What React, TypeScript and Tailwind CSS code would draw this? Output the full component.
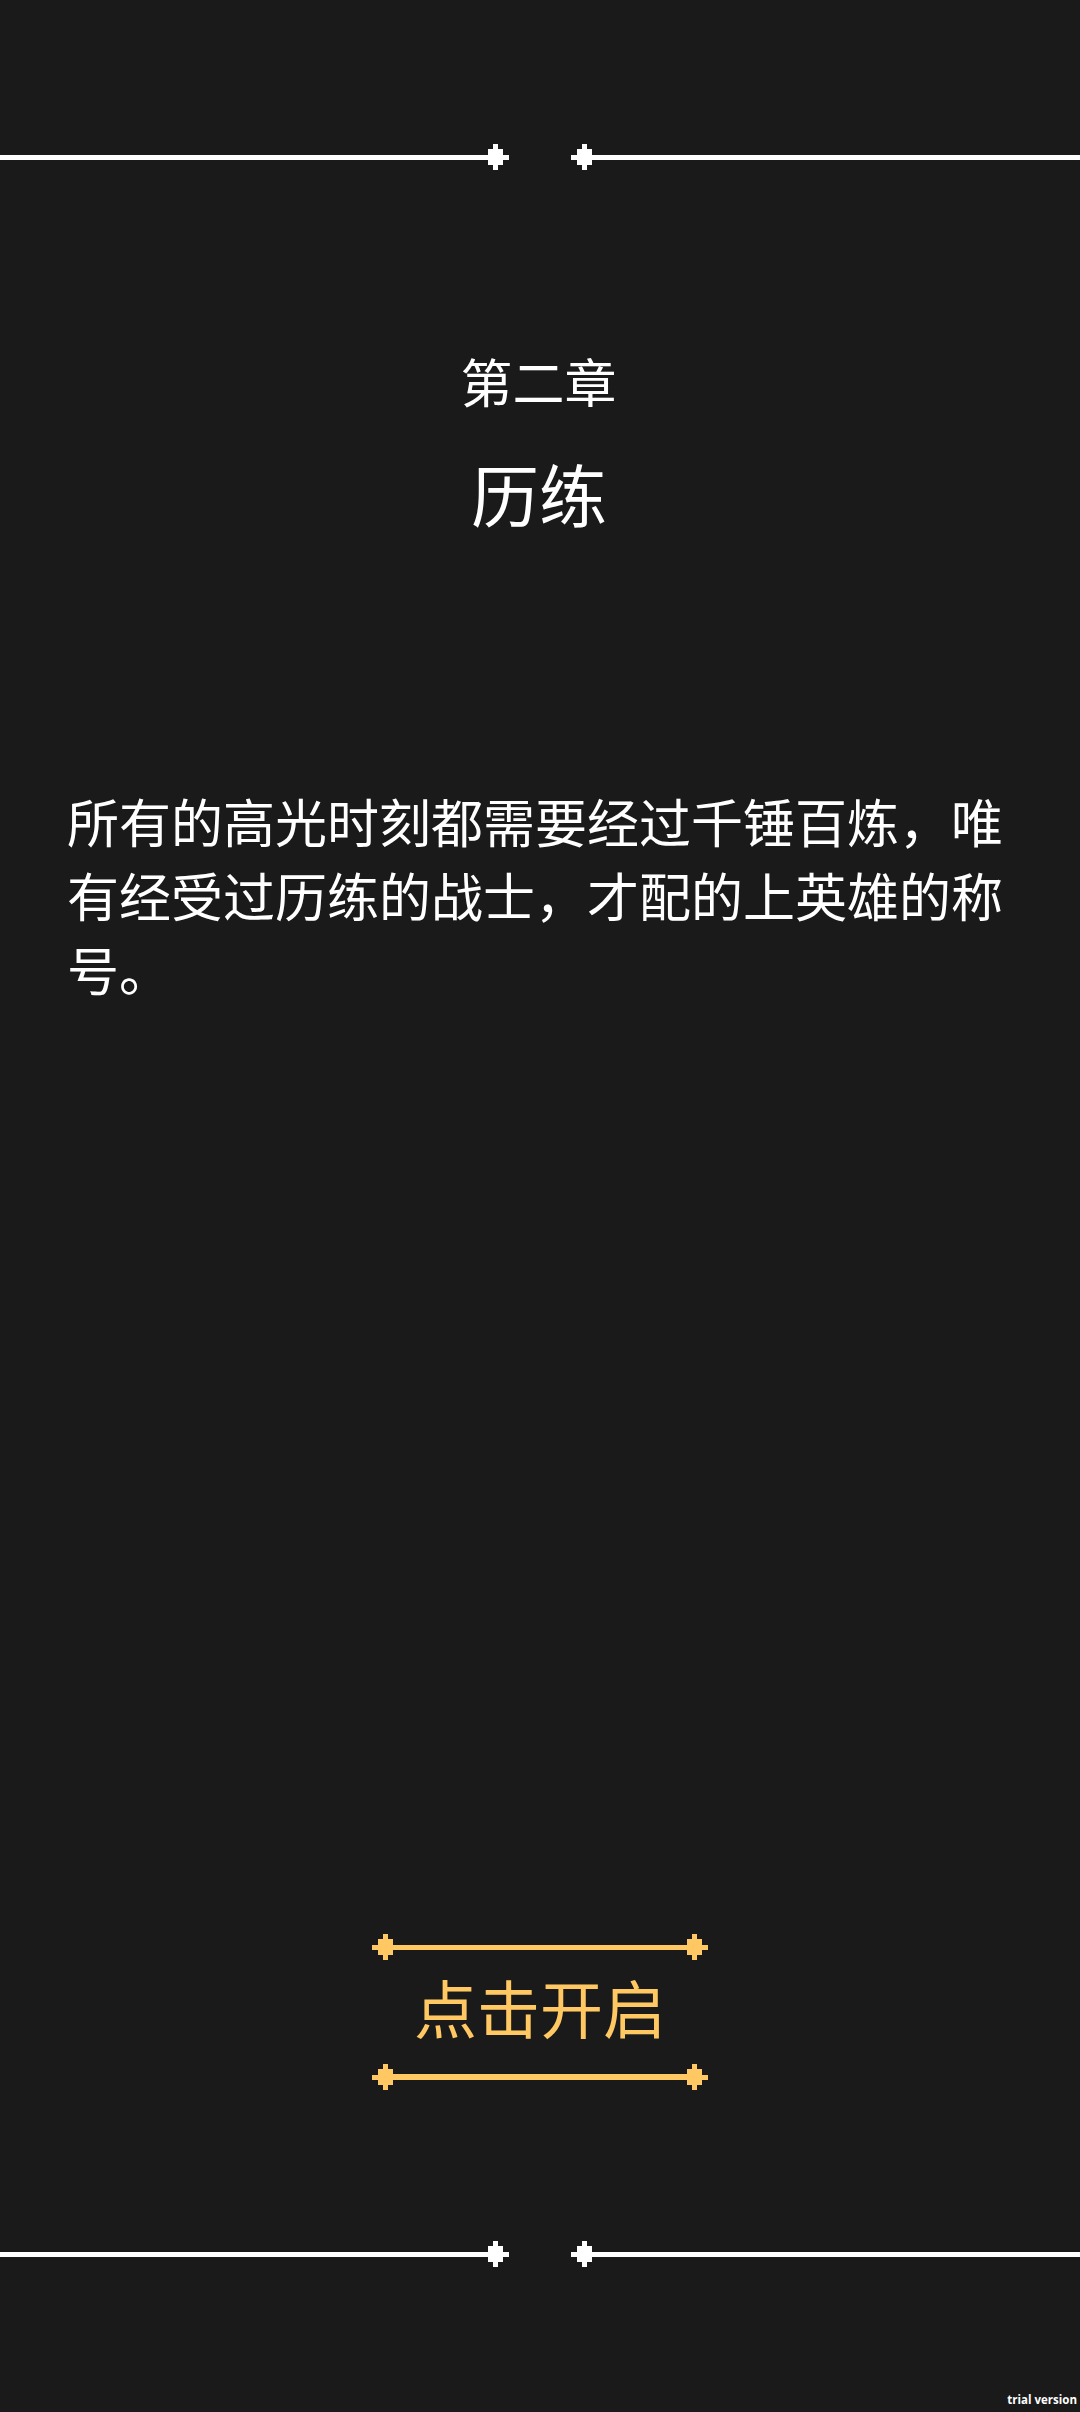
import React from 'react';

const Knob: React.FC<{ flip?: boolean }> = ({ flip }) => (
    <svg width="21" height="26" viewBox="0 0 21 26" fill="currentColor" className={`shrink-0 ${flip ? '-scale-x-100' : ''}`} shapeRendering="crispEdges">
        <rect x="0" y="5" width="15" height="16" />
        <rect x="5" y="0" width="5" height="26" />
        <rect x="15" y="11" width="6" height="5" />
    </svg>
);

const Divider: React.FC = () => (
    <div className="flex items-center text-white">
        <div className="h-[5px] flex-1 bg-white" />
        <Knob />
        <div className="w-[62px]" />
        <Knob flip />
        <div className="h-[5px] flex-1 bg-white" />
    </div>
);

const ButtonRule: React.FC<{ thick?: boolean }> = ({ thick }) => (
    <div className="flex items-center text-[#ffc862]">
        <Knob flip />
        <div className={`flex-1 bg-[#ffc862] ${thick ? 'h-[6px]' : 'h-[5px]'}`} />
        <Knob />
    </div>
);

export default function App() {
    return (
        <div className="relative flex h-[2412px] w-[1080px] flex-col overflow-hidden bg-[#1a1a1a] pt-[144px] font-['Noto_Sans_CJK_SC',sans-serif] text-white">
            <Divider />

            <p className="mt-[174px] pr-[3px] text-center text-[52px] leading-[74px]">第二章</p>
            <h1 className="mt-[35px] pr-[2px] text-center text-[68px] font-normal leading-[80px]">历练</h1>

            <p className="mt-[251px] pl-[67px] pr-[68px] text-[52px] leading-[74px]">
                所有的高光时刻都需要经过千锤百炼，唯有经受过历练的战士，才配的上英雄的称号。
            </p>

            <button className="mx-auto mt-[928px] block w-[336px] text-[#ffc862]">
                <ButtonRule />
                <span className="mt-[6px] block text-center text-[63px] leading-[80px]">点击开启</span>
                <span className="mt-[18px] block"><ButtonRule thick /></span>
            </button>

            <div className="mt-[151px]">
                <Divider />
            </div>

            <span className="absolute bottom-[3px] right-[3px] font-['Open_Sans',sans-serif] text-[11.5px] font-bold leading-[18px] text-white">trial version</span>
        </div>
    );
}
